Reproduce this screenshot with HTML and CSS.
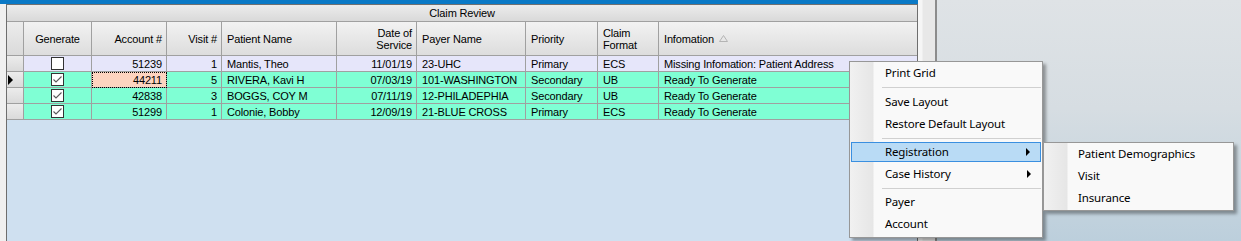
FILE: index.html
```html
<!DOCTYPE html>
<html lang="en">
<head>
    <meta charset="UTF-8">
    <meta name="viewport" content="width=device-width, initial-scale=1.0">
    <title>Claim Review</title>
    <link rel="stylesheet" href="styles.css">
</head>
<body>
    <div class="screen">
        <div class="left">
            <div class="bluebar"></div>
            <div class="gridwrap">
                <div class="grid">
                    <div class="caption">Claim Review</div>
                    <div class="row head">
                        <div class="cell rh"></div>
                        <div class="cell center">Generate</div>
                        <div class="cell right">Account #</div>
                        <div class="cell right">Visit #</div>
                        <div class="cell">Patient Name</div>
                        <div class="cell right">Date of<br>Service</div>
                        <div class="cell">Payer Name</div>
                        <div class="cell">Priority</div>
                        <div class="cell">Claim<br>Format</div>
                        <div class="cell last">Infomation
                            <svg class="sort" width="9" height="7" viewBox="0 0 9 7"><polygon points="4.5,0.5 8.5,6.5 0.5,6.5" fill="none" stroke="#b4b4b4"/></svg>
                        </div>
                    </div>
                    <div class="row lav">
                        <div class="cell rh"></div>
                        <div class="cell center"><span class="chk"></span></div>
                        <div class="cell right">51239</div>
                        <div class="cell right">1</div>
                        <div class="cell">Mantis, Theo</div>
                        <div class="cell right">11/01/19</div>
                        <div class="cell">23-UHC</div>
                        <div class="cell">Primary</div>
                        <div class="cell">ECS</div>
                        <div class="cell last">Missing Infomation: Patient Address</div>
                    </div>
                    <div class="row aqua">
                        <div class="cell rh"><span class="cur"></span></div>
                        <div class="cell center"><span class="chk"><svg width="11" height="11" viewBox="0 0 11 11"><polyline points="1.5,5.5 4,8 9.5,2.5" fill="none" stroke="#5a5a5a" stroke-width="1.1"/></svg></span></div>
                        <div class="cell right sel">44211</div>
                        <div class="cell right">5</div>
                        <div class="cell">RIVERA, Kavi H</div>
                        <div class="cell right">07/03/19</div>
                        <div class="cell">101-WASHINGTON</div>
                        <div class="cell">Secondary</div>
                        <div class="cell">UB</div>
                        <div class="cell last">Ready To Generate</div>
                    </div>
                    <div class="row aqua">
                        <div class="cell rh"></div>
                        <div class="cell center"><span class="chk"><svg width="11" height="11" viewBox="0 0 11 11"><polyline points="1.5,5.5 4,8 9.5,2.5" fill="none" stroke="#5a5a5a" stroke-width="1.1"/></svg></span></div>
                        <div class="cell right">42838</div>
                        <div class="cell right">3</div>
                        <div class="cell">BOGGS, COY M</div>
                        <div class="cell right">07/11/19</div>
                        <div class="cell">12-PHILADEPHIA</div>
                        <div class="cell">Secondary</div>
                        <div class="cell">UB</div>
                        <div class="cell last">Ready To Generate</div>
                    </div>
                    <div class="row aqua">
                        <div class="cell rh"></div>
                        <div class="cell center"><span class="chk"><svg width="11" height="11" viewBox="0 0 11 11"><polyline points="1.5,5.5 4,8 9.5,2.5" fill="none" stroke="#5a5a5a" stroke-width="1.1"/></svg></span></div>
                        <div class="cell right">51299</div>
                        <div class="cell right">1</div>
                        <div class="cell">Colonie, Bobby</div>
                        <div class="cell right">12/09/19</div>
                        <div class="cell">21-BLUE CROSS</div>
                        <div class="cell">Primary</div>
                        <div class="cell">ECS</div>
                        <div class="cell last">Ready To Generate</div>
                    </div>
                    <div class="empty"></div>
                </div>
            </div>
        </div>
        <div class="splitter"></div>
        <div class="rightpane"></div>

        <div class="menu main-menu">
            <div class="item">Print Grid</div>
            <div class="sep first"></div>
            <div class="item">Save Layout</div>
            <div class="item">Restore Default Layout</div>
            <div class="sep"></div>
            <div class="item hl sub">Registration</div>
            <div class="item sub">Case History</div>
            <div class="sep"></div>
            <div class="item">Payer</div>
            <div class="item">Account</div>
        </div>

        <div class="menu sub-menu">
            <div class="item">Patient Demographics</div>
            <div class="item">Visit</div>
            <div class="item">Insurance</div>
        </div>
    </div>
</body>
</html>
```

FILE: styles.css
```css
body {
    margin: 0;
    font-family: "Liberation Sans", Arial, sans-serif;
    font-size: 11px;
    letter-spacing: -0.15px;
    color: #000;
}
.screen {
    position: relative;
    display: flex;
    width: 1241px;
    height: 241px;
    overflow: hidden;
    background-color: #f0f0f0;
}
.left {
    width: 918px;
    display: flex;
    flex-direction: column;
}
.bluebar {
    height: 4px;
    background-color: #0a79c6;
}
.gridwrap {
    flex: 1;
    display: flex;
    padding-left: 6px;
}
.grid {
    flex: 1;
    display: flex;
    flex-direction: column;
    border-left: 1px solid #6e6e6e;
    border-right: 1px solid #6e6e6e;
}
.caption {
    height: 16px;
    line-height: 16px;
    text-align: center;
    border-top: 1px solid #707070;
    border-bottom: 1px solid #a0a0a0;
    background: linear-gradient(#ececec, #d9d9d9);
}
.row {
    display: grid;
    grid-template-columns: 17px 68px 75px 55px 115px 80px 109px 72px 61px 1fr;
    height: 16px;
}
.cell {
    box-sizing: border-box;
    display: flex;
    align-items: center;
    padding: 0 4px 0 5px;
    border-right: 1px solid #a0a0a0;
    border-bottom: 1px solid #a0a0a0;
    white-space: nowrap;
}
.cell.last {
    border-right: none;
}
.cell.right {
    justify-content: flex-end;
    text-align: right;
}
.cell.center {
    justify-content: center;
    padding: 0;
}
.head {
    height: 34px;
    background: linear-gradient(#f2f2f2, #dcdcdc);
}
.head .cell {
    line-height: 12px;
}
.lav {
    background-color: #e6e6fa;
}
.aqua {
    background-color: #7fffd4;
}
.rh {
    padding: 0;
    background: linear-gradient(#ececec, #dadada);
}
.cur {
    width: 0;
    height: 0;
    margin-left: 1px;
    border-left: 5px solid #000;
    border-top: 5px solid transparent;
    border-bottom: 5px solid transparent;
}
.sel {
    background-color: #fdd4c0;
    outline: 1px dotted #000;
    outline-offset: -1px;
}
.chk {
    box-sizing: border-box;
    width: 13px;
    height: 13px;
    border: 1px solid #333;
    background-color: #fff;
    display: flex;
}
.sort {
    margin-left: 5px;
}
.empty {
    flex: 1;
    background-color: #cfe0f0;
}
.splitter {
    width: 17px;
    background: linear-gradient(to right, #f6f6f6 0, #f6f6f6 4px, #e8e8e8 5px);
    border-right: 2px solid #8c8c8c;
}
.rightpane {
    flex: 1;
    background: linear-gradient(#dfe3e6, #d6dde2 45%, #bccfdc);
}

.menu {
    position: absolute;
    box-sizing: border-box;
    border: 1px solid #979797;
    background: linear-gradient(to right, #f1f1f1, #e6e6e6 23px, #f9f9f9 24px);
    box-shadow: 3px 3px 3px rgba(0, 0, 0, 0.35);
    font-family: "Noto Sans", "Open Sans", sans-serif;
    font-size: 11.5px;
    letter-spacing: -0.15px;
}
.main-menu {
    left: 849px;
    top: 61px;
    width: 194px;
    height: 177px;
    padding: 0 1px;
}
.sub-menu {
    left: 1043px;
    top: 142px;
    width: 191px;
    height: 69px;
    padding: 0;
}
.item {
    position: relative;
    height: 22px;
    line-height: 22px;
    padding-left: 34px;
}
.item.hl {
    box-sizing: border-box;
    height: 20px;
    line-height: 18px;
    margin: 1px 0;
    background-color: #b9dbf5;
    border: 1px solid #3a8fe0;
    padding-left: 33px;
}
.item.sub::after {
    content: "";
    position: absolute;
    right: 10px;
    top: 50%;
    margin-top: -4px;
    border-left: 4px solid #000;
    border-top: 4px solid transparent;
    border-bottom: 4px solid transparent;
}
.sep {
    height: 6px;
    position: relative;
}
.sep.first {
    height: 7px;
}
.sep::after {
    content: "";
    position: absolute;
    left: 31px;
    right: 0;
    top: 3px;
    border-top: 1px solid #d0d0d0;
}
```
